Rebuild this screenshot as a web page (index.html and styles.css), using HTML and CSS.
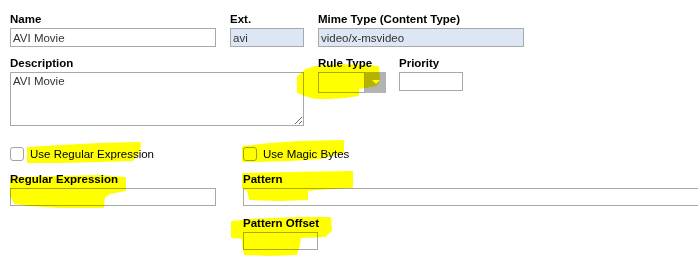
FILE: index.html
```html
<!DOCTYPE html>
<html lang="en">
<head>
<meta charset="UTF-8">
<title>Mime Type</title>
<link rel="stylesheet" href="styles.css">
</head>
<body>
<form class="mime-form">
    <div class="row row-top">
        <div class="field field-name">
            <label for="name">Name</label>
            <input id="name" type="text" value="AVI Movie">
        </div>
        <div class="field field-ext">
            <label for="ext">Ext.</label>
            <input id="ext" class="locked" type="text" value="avi" readonly>
        </div>
        <div class="field field-mime">
            <label for="mime">Mime Type (Content Type)</label>
            <input id="mime" class="locked" type="text" value="video/x-msvideo" readonly>
        </div>
    </div>

    <div class="row row-desc">
        <div class="field field-desc">
            <label for="desc">Description</label>
            <textarea id="desc">AVI Movie</textarea>
        </div>
        <div class="field field-rule">
            <label>Rule Type</label>
            <div class="select">
                <span class="select-value"></span>
                <span class="select-button"><span class="select-arrow"></span></span>
            </div>
        </div>
        <div class="field field-priority">
            <label for="priority">Priority</label>
            <input id="priority" type="text">
        </div>
    </div>

    <div class="columns">
        <div class="column column-left">
            <label class="check"><input type="checkbox"> Use Regular Expression</label>
            <div class="field field-regex">
                <label for="regex">Regular Expression</label>
                <input id="regex" type="text">
            </div>
        </div>
        <div class="column">
            <label class="check"><input type="checkbox"> Use Magic Bytes</label>
            <div class="field field-pattern">
                <label for="pattern">Pattern</label>
                <input id="pattern" type="text">
            </div>
            <div class="field field-offset">
                <label for="offset">Pattern Offset</label>
                <input id="offset" type="text">
            </div>
        </div>
    </div>
</form>

<!-- marcas de resaltador encima del formulario -->
<svg class="marker" width="698" height="262" viewBox="0 0 698 262">
    <path d="M298,77 L306,70 L316,67 L340,65 L366,66 L378,67 L379,80 L376,85 L365,87 L358,88 L358,95 L345,97 L330,98 L315,98 L305,95 L298,92 Z"/>
    <path d="M28,148 L60,146 L100,144 L140,143 L139,152 L132,160 L100,161 L60,162 L28,162 Z"/>
    <path d="M243,147 L270,144 L300,142 L343,141 L343,152 L320,158 L290,160 L255,161 L243,161 Z"/>
    <path d="M11,178 L60,177 L100,176 L125,178 L125,190 L110,193 L104,197 L103,207 L60,207 L30,205 L15,203 L11,196 Z"/>
    <path d="M243,174 L290,173 L352,172 L352,187 L330,188 L307,190 L307,199 L280,200 L250,199 L248,190 L243,188 Z"/>
    <path d="M232,222 L250,220 L300,218 L330,218 L331,230 L325,236 L300,237 L299,245 L296,254 L270,255 L245,254 L243,245 L243,238 L232,237 Z"/>
</svg>
</body>
</html>
```

FILE: styles.css
```css
html {
    overflow: hidden;
}

body {
    margin: 0;
    padding: 12px 10px 0;
    background: #fff;
    color: #000;
    font-family: "Liberation Sans", Arial, sans-serif;
    font-size: 11.5px;
}

.row {
    display: flex;
    gap: 14px;
}

.field label {
    display: block;
    font-weight: bold;
    line-height: 14px;
    padding-bottom: 2px;
}

input[type="text"],
textarea {
    display: block;
    box-sizing: border-box;
    height: 19px;
    margin: 0;
    padding: 0 2px;
    border: 1px solid #a9a9a9;
    background: #fff;
    color: #333;
    font-family: inherit;
    font-size: 11.5px;
    outline: none;
}

input.locked {
    background: #dde6f5;
}

.field-name input { width: 206px; }
.field-ext input { width: 74px; }
.field-mime input { width: 206px; }

.row-desc {
    margin-top: 9px;
}

textarea {
    width: 294px;
    height: 54px;
    padding: 2px;
    resize: both;
}

/* select hecho a mano */
.select {
    display: flex;
    width: 68px;
    height: 21px;
}

.select-value {
    flex: 1;
    border: 1px solid #a9a9a9;
    background: #fff;
}

.select-button {
    width: 21px;
    background: #b3b3b3;
    position: relative;
}

.select-arrow {
    position: absolute;
    left: 7px;
    top: 8px;
    border-left: 4px solid transparent;
    border-right: 4px solid transparent;
    border-top: 4px solid #fff;
}

.field-rule {
    margin-right: -1px;
}

.field-priority input { width: 64px; }

.columns {
    display: flex;
    margin-top: 21px;
}

.column {
    flex-shrink: 0;
}

.column-left {
    width: 233px;
}

.check {
    display: flex;
    align-items: center;
    gap: 6px;
    height: 14px;
    line-height: 14px;
    margin-bottom: 11px;
}

.check input {
    appearance: none;
    box-sizing: border-box;
    width: 14px;
    height: 14px;
    margin: 0;
    border: 1px solid #a3a3a3;
    border-radius: 3px;
    background: #fff;
}

.field-regex input { width: 206px; height: 18px; }
.field-pattern input { width: 480px; height: 18px; }

.field-offset {
    margin-top: 10px;
}

.field-offset input { width: 75px; height: 18px; }

.marker {
    position: absolute;
    top: 0;
    left: 0;
    pointer-events: none;
    mix-blend-mode: multiply;
}

.marker path {
    fill: #ffff00;
    stroke: #ffff00;
    stroke-width: 2;
    stroke-linejoin: round;
}
```
